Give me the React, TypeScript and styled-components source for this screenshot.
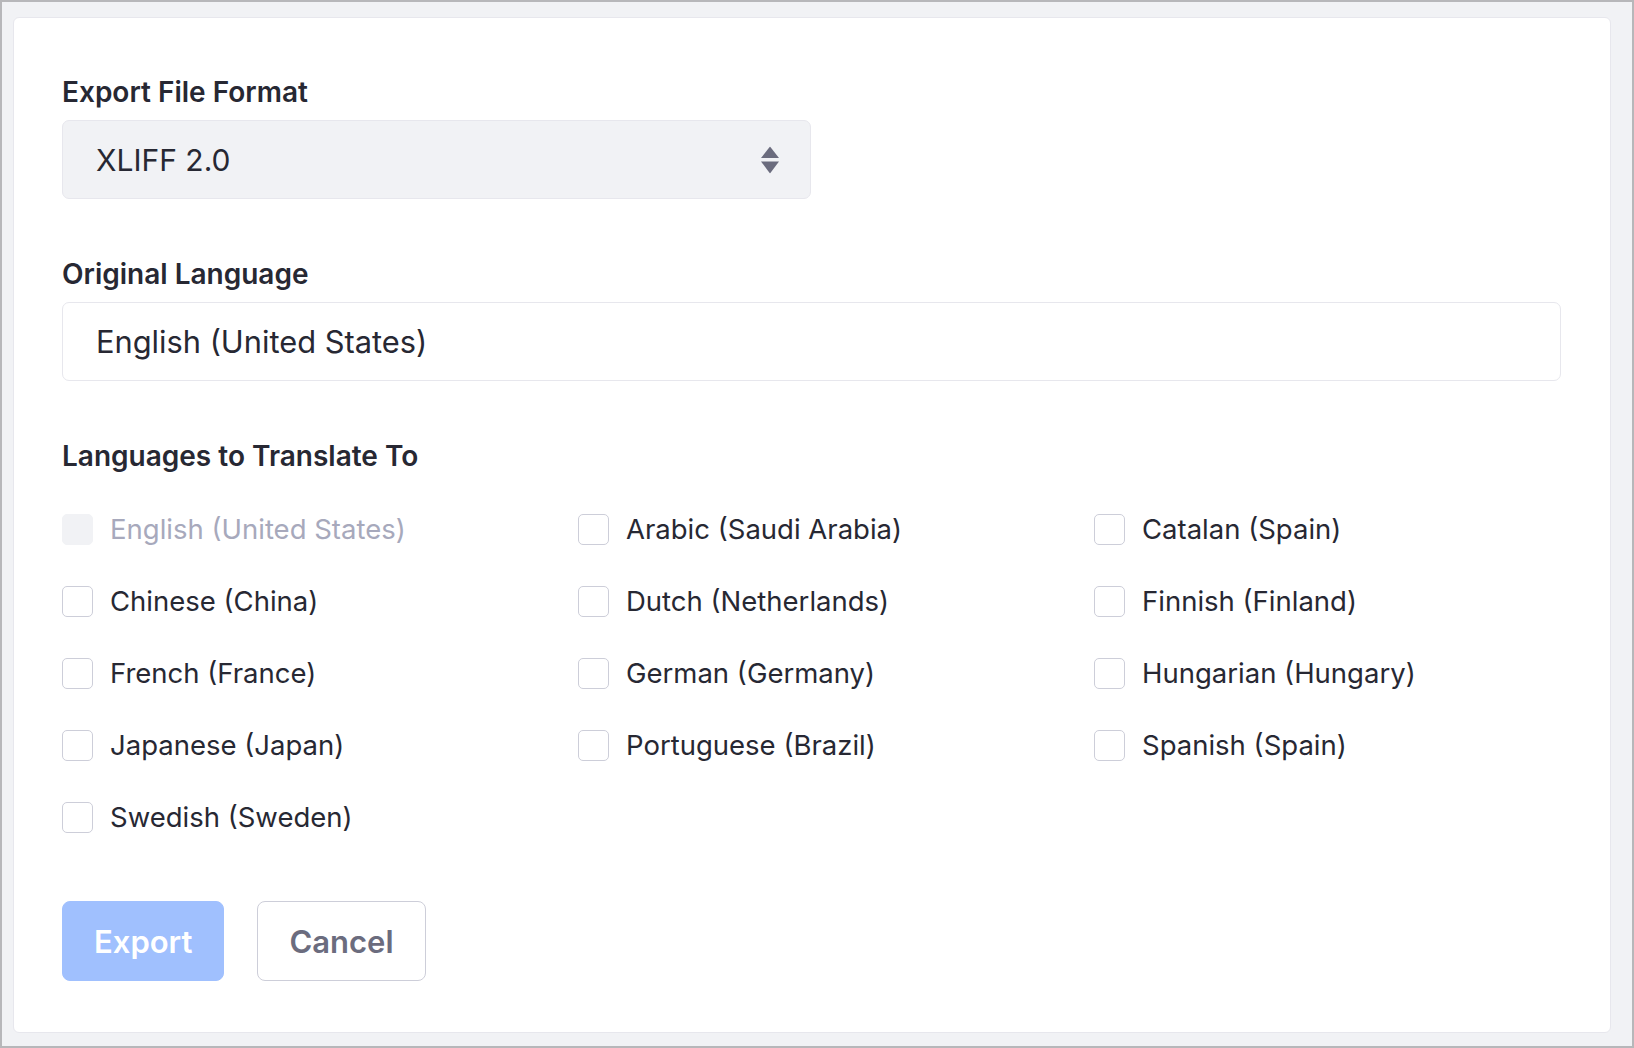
import React from "react";
import styled, { createGlobalStyle } from "styled-components";

const Global = createGlobalStyle`
  html, body { margin: 0; padding: 0; }
  body {
    background: #f1f2f5;
    font-family: Inter, "Noto Sans", "Liberation Sans", sans-serif;
    color: #272833;
  }
  * { box-sizing: border-box; }
`;

const Frame = styled.div`
  width: 1634px;
  height: 1048px;
  border: 2px solid #b7b7ba;
  background: #f1f2f5;
  padding: 15px 21px 14px 11px;
`;

const Card = styled.div`
  background: #ffffff;
  border: 1px solid #e7e7ed;
  border-radius: 6px;
  padding: 58px 49px 51px 48px;
  display: flex;
  flex-direction: column;
`;

const FormGroup = styled.div`
  display: flex;
  flex-direction: column;
  margin-bottom: 59px;
`;

const Label = styled.label`
  display: block;
  font-size: 28px;
  line-height: 32px;
  font-weight: 600;
  color: #272833;
  margin-bottom: 12px;
`;

const SelectBox = styled.div`
  position: relative;
  width: 749px;
  height: 79px;
  background: #f1f2f5;
  border: 1px solid #e7e7ed;
  border-radius: 7px;
  display: flex;
  align-items: center;
  padding: 0 33px;
  font-size: 30px;
  color: #272833;
`;

const SelectArrow = styled.svg`
  position: absolute;
  right: 31px;
  top: 50%;
  transform: translateY(-50%);
`;

const Input = styled.div`
  width: 100%;
  height: 79px;
  background: #ffffff;
  border: 1px solid #e7e7ed;
  border-radius: 7px;
  display: flex;
  align-items: center;
  padding: 0 33px;
  font-size: 30.8px;
  color: #272833;
`;

const CheckGrid = styled.div`
  display: grid;
  grid-template-columns: repeat(3, 1fr);
  column-gap: 49px;
  grid-auto-rows: 72px;
  margin-top: 9px;
  margin-bottom: 48px;
`;

const CheckItem = styled.label<{ $disabled?: boolean }>`
  display: flex;
  align-items: center;
  gap: 17px;
  font-size: 27.5px;
  color: ${(p) => (p.$disabled ? "#a7a9bc" : "#272833")};
`;

const Box = styled.span<{ $disabled?: boolean }>`
  width: 31px;
  height: 31px;
  flex: 0 0 31px;
  border-radius: 5px;
  background: ${(p) => (p.$disabled ? "#f1f2f5" : "#ffffff")};
  border: 1px solid ${(p) => (p.$disabled ? "#f1f2f5" : "#cdced9")};
`;

const Actions = styled.div`
  display: flex;
  gap: 33px;
`;

const Button = styled.button<{ $primary?: boolean }>`
  height: 80px;
  padding: 0 31px;
  border-radius: 8px;
  font-family: inherit;
  font-size: 31px;
  font-weight: 600;
  cursor: pointer;
  background: ${(p) => (p.$primary ? "#a0c0fe" : "#ffffff")};
  color: ${(p) => (p.$primary ? "#ffffff" : "#6b6c7e")};
  border: 1px solid ${(p) => (p.$primary ? "#a0c0fe" : "#cdced9")};
`;

const languages: { name: string; disabled?: boolean }[] = [
  { name: "English (United States)", disabled: true },
  { name: "Arabic (Saudi Arabia)" },
  { name: "Catalan (Spain)" },
  { name: "Chinese (China)" },
  { name: "Dutch (Netherlands)" },
  { name: "Finnish (Finland)" },
  { name: "French (France)" },
  { name: "German (Germany)" },
  { name: "Hungarian (Hungary)" },
  { name: "Japanese (Japan)" },
  { name: "Portuguese (Brazil)" },
  { name: "Spanish (Spain)" },
  { name: "Swedish (Sweden)" },
];

export default function App() {
  return (
    <>
      <Global />
      <Frame>
        <Card>
          <FormGroup>
            <Label>Export File Format</Label>
            <SelectBox>
              XLIFF 2.0
              <SelectArrow width="18" height="27" viewBox="0 0 18 27">
                <path d="M9 0 L18 11.5 L0 11.5 Z" fill="#6b6c7e" />
                <path d="M0 15 L18 15 L9 27 Z" fill="#6b6c7e" />
              </SelectArrow>
            </SelectBox>
          </FormGroup>
          <FormGroup>
            <Label>Original Language</Label>
            <Input>English (United States)</Input>
          </FormGroup>
          <Label>Languages to Translate To</Label>
          <CheckGrid>
            {languages.map((l) => (
              <CheckItem key={l.name} $disabled={l.disabled}>
                <Box $disabled={l.disabled} />
                {l.name}
              </CheckItem>
            ))}
          </CheckGrid>
          <Actions>
            <Button $primary>Export</Button>
            <Button>Cancel</Button>
          </Actions>
        </Card>
      </Frame>
    </>
  );
}
